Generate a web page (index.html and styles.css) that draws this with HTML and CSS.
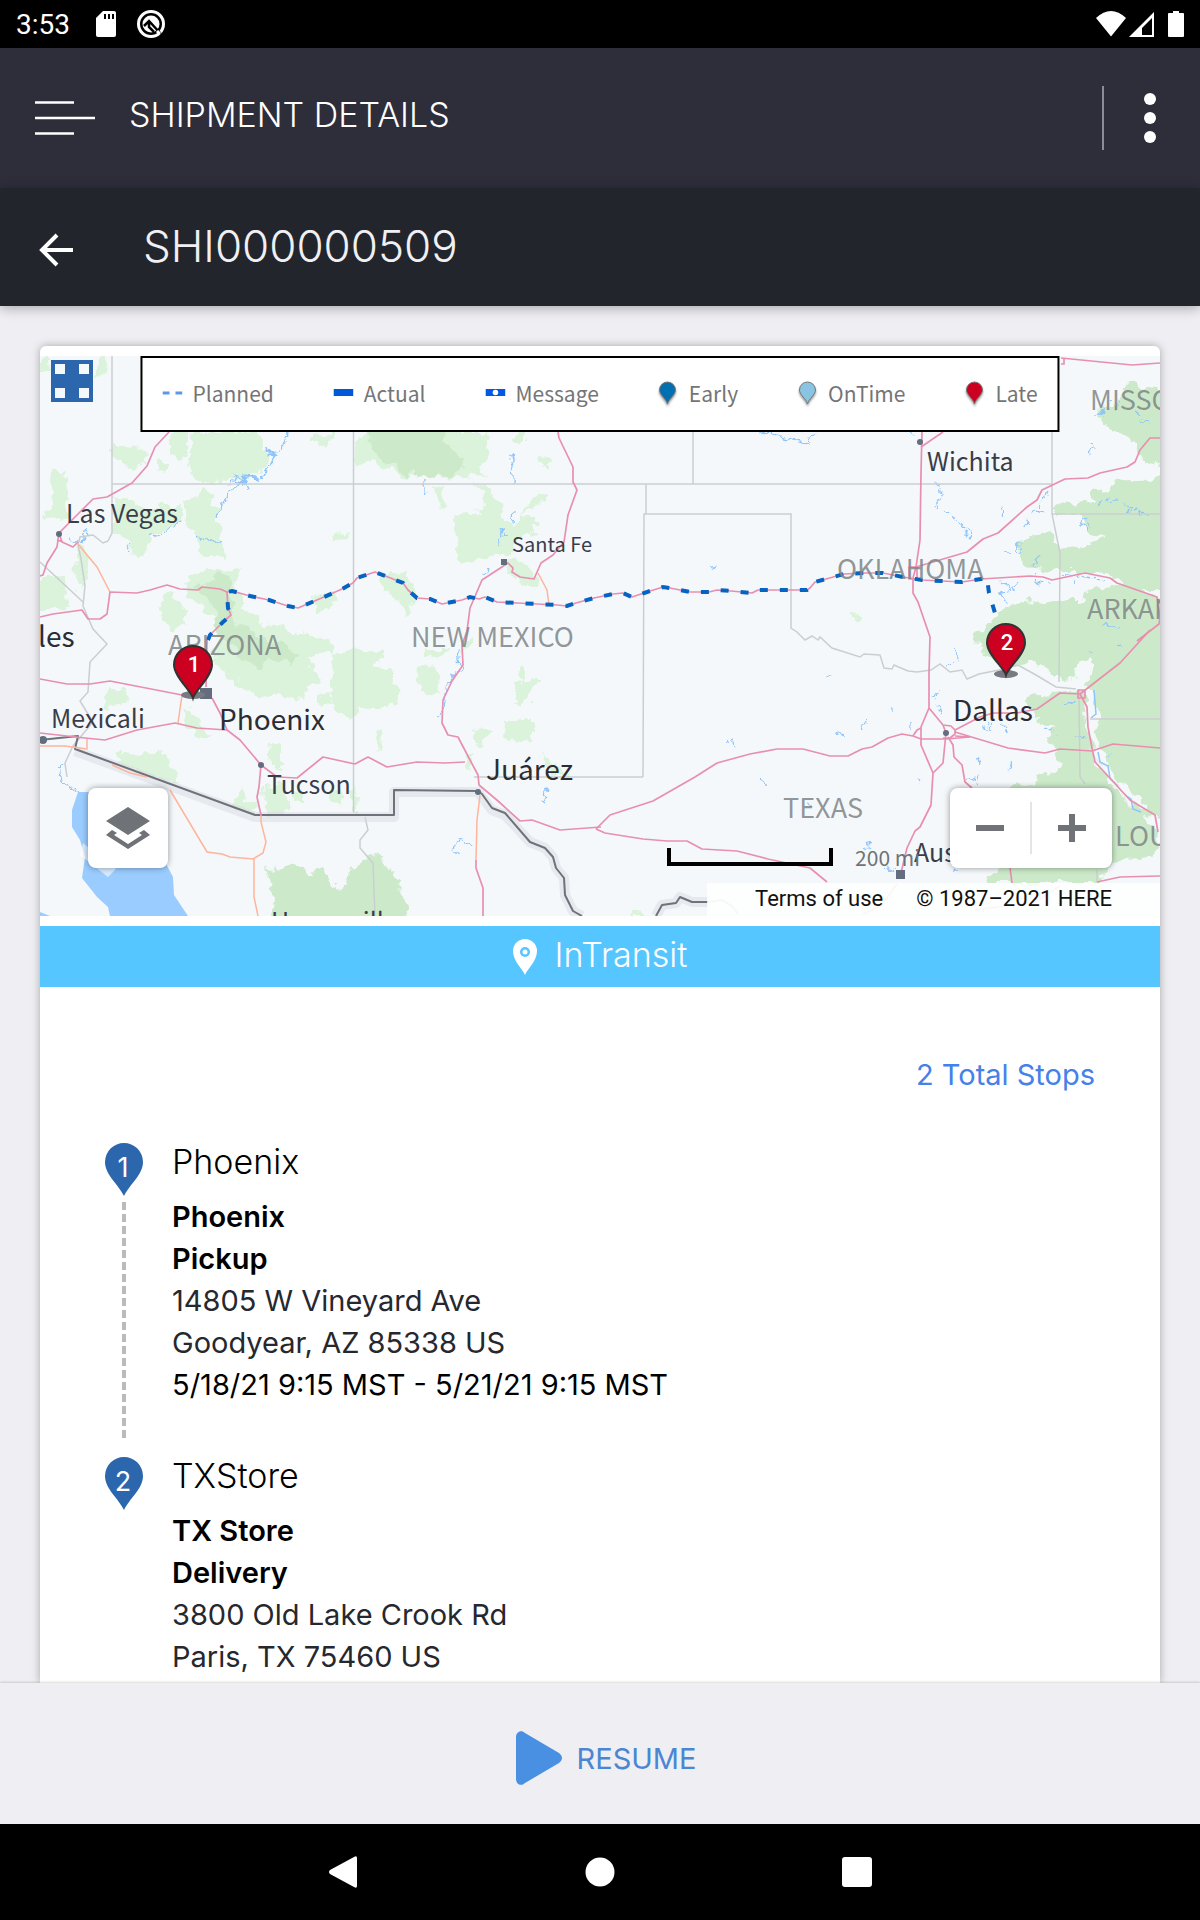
FILE: index.html
```html
<!DOCTYPE html>
<html lang="en">
<head>
    <meta charset="UTF-8">
    <meta name="viewport" content="width=device-width, initial-scale=1.0">
    <title>Shipment Details</title>
    <link rel="stylesheet" href="styles.css">
</head>
<body>
    <div class="status-bar">
        <span class="time">3:53</span>
        <svg class="sd-icon" width="20" height="26" viewBox="0 0 20 26">
            <path fill="#fff" d="M7 0h11a2 2 0 0 1 2 2v22a2 2 0 0 1-2 2H2a2 2 0 0 1-2-2V7z"/>
            <path stroke="#000" stroke-width="2" d="M9 3v5M13 3v5M17 3v5"/>
        </svg>
        <svg class="q-icon" width="30" height="30" viewBox="0 0 30 30">
            <circle cx="15" cy="15" r="12.500" fill="none" stroke="#fff" stroke-width="3"/>
            <circle cx="15" cy="15" r="8.500" fill="#fff"/>
            <path stroke="#000" stroke-width="2.500" fill="none" d="M8 17l5-5 12 13M13 14v4l5 5"/>
            <path stroke="#fff" stroke-width="3" d="M21 22l3 3"/>
        </svg>
        <svg class="signal-icons" width="88" height="26" viewBox="0 0 88 26">
            <path fill="#fff" d="M0 7Q15-7 30 7L15 25.500z"/>
            <path fill="#fff" fill-rule="evenodd" d="M58 1v25H33zM56 7L46 17v7h10z"/>
            <path fill="#fff" d="M77 0h6v2h4a1 1 0 0 1 1 1v22a1 1 0 0 1-1 1H73a1 1 0 0 1-1-1V3a1 1 0 0 1 1-1h4z"/>
        </svg>
    </div>

    <header class="app-bar">
        <button class="icon-btn" aria-label="Menu">
            <svg width="60" height="34" viewBox="0 0 60 34" stroke="#fff" stroke-width="2.500"><path d="M0 1.500h39M0 17h60M0 32.500h39"/></svg>
        </button>
        <h1>SHIPMENT DETAILS</h1>
        <button class="icon-btn more" aria-label="More">
            <svg width="12" height="50" viewBox="0 0 12 50" fill="#fff"><circle cx="6" cy="6" r="6"/><circle cx="6" cy="25" r="6"/><circle cx="6" cy="44" r="6"/></svg>
        </button>
    </header>

    <div class="sub-bar">
        <button class="icon-btn" aria-label="Back">
            <svg width="34" height="34" viewBox="0 0 34 34" fill="none" stroke="#fff" stroke-width="4"><path d="M34 17H3M18 2L3 17l15 15"/></svg>
        </button>
        <h2>SHI000000509</h2>
    </div>

    <main>
        <div class="card">
            <div class="map">
                <svg class="map-canvas" viewBox="40 356 1120 560" preserveAspectRatio="xMidYMid slice">
                    <!-- ragged outlines for parks and lakes -->
                    <filter id="rough" x="0" y="0" width="100%" height="100%">
                        <feTurbulence type="fractalNoise" baseFrequency="0.09" numOctaves="3" seed="4"/>
                        <feDisplacementMap in="SourceGraphic" scale="14" xChannelSelector="R" yChannelSelector="G"/>
                    </filter>
                    <rect x="40" y="356" width="1120" height="560" fill="#f4f8fb"/>

                    <!-- parks -->
                    <g fill="#daf3da" filter="url(#rough)">
                        <path d="M40 356h10l1 17-11 1zM96 360l5-4 6 9-2 12-9-2z"/>
                        <path d="M170 440l5-8h13l-1 25-9 3-8-10zM190 432h68l3 10 9 15-4 12-8 3-15 5-26 5-24-2-5-12 4-15zM112 442l11 5 24 1 1 14-9 2-6 6-10-10-11-5zM158 458l9 4v12l-9-2zM52 472h13l3 28-3 18-18 2-2-8 5-5z"/>
                        <path d="M113 500l14-3 13 10h20l17 0 5 15-25 10-9 12-3 9-5 5-13-15-14-10zM182 502l15-5 5-9 6 2 4 13 10 4-4 16 4 17 3 17-25-2-3-18-9-10z"/>
                        <path d="M183 580l24-12 12 3 24-1-10 12 10 15-3 10 23 16 18 6 22 6 27 5 5 15-18-3-10 8 13 20-15 10-8 12-14-9-23 4-17-7-8-10-15-10-10-20 15-20-20-20-15-10z"/>
                        <path d="M160 595l13-1 4 9 10 7v13l-14 7-10-10v-13zM30 577h35l2 31-37 4zM78 545h7l3 35-8 12-4-22z"/>
                        <path d="M355 440l15-8h117l-2 13 5 10-10 12 7 8-17-2-5 7 25 7 10 18 5 15 10 5 15-25 17-8v8l-17 7-10 11 15 2v12l-15 8-10 15h-15l-20 8-15 2-5-35-3-15 18-3 13-2 4-5-9-20-18-10-20 3-15-3-25 2-10-7-25-10-10 5z"/>
                        <path d="M313 435l22-3v6l-13 9-9-4zM433 485l9 2 1 23-5 1zM505 560l20 0 8 13 7 10-15 4-10-10-7-7zM380 575l25-5 10 20-2 15-8 13-5-18-15-10zM313 595l22-2-2 12-13 7-10-7zM514 432l11-2v12h-11zM540 457l8-1 6 4-7 8-7-4z"/>
                        <path d="M332 655l21-7 17 5 13-5v12l-13 7 20 3 10 20-10 17-27 0-13 11-18-13zM418 665l19 2 3 26h-15l-8-10zM427 648l20 0-6 7-14 2zM460 640l14-2v10l-14 4zM505 720h27v20l-25 2zM475 730l18-2-6 10-12 7zM543 753l20 20 10 4h-16l-12-12zM513 683l12-2v-15l-8 0v13h23l-10 11v12h-17z"/>
                        <path d="M107 688h20l-2 19-20 1zM182 708l15 7 6 12 9 10h-15l-14-10zM117 754l36-1 2-5 10 2 3 13 12 20-17-3-46-17zM268 743l14 2v25l-12-7zM264 788l20-4 5 26-22 4zM235 790l8-2v12l15 3-5 9-18-4zM318 695l12-2 2 14-14-2zM376 730l9-3-1 15-5 10zM295 793l8 0v10l-8 0zM330 790l12 2-2 14-10-4zM353 783l5 12-1 16h-4z"/>
                        <path d="M850 615l8-1 5 5-8 2zM631 910l10 0 4 6h-14zM465 755l8-3v22l-8-8zM331 533l10 3 7-4-4 8-9 1z"/>
                    </g>
                    <g fill="#cceaca" filter="url(#rough)">
                        <path d="M220 572l12 8-2 12 3 28 27 17 25 8 15 8-10 12-20-5-10 8-20-10-10-17-10-1-8-12 5-18-14-14-10-10 14-3z"/>
                        <path d="M365 426h85l-8 14 8 10 10 5 5 13-15 7-20 3-14-3 0-8-8 9-8-3-5-8-15-7-8-8z"/>
                        <path d="M265 865l7 8 6-5 12-5 17 7 6 7 2-7 8-3 4 8 3 15 5-4 12 1 4-13 12-17 14-4 13 17 5 3 5 17 10 36H270l2-31z"/>
                        <path d="M1127 383l6-2 9 9 28-7v84l-23-4-10-13-5-10-17-8-13-12-4-10 17-5z"/>
                        <path d="M1170 473l-20 7-33 3-10 7-17 2 7 11-15-1-29 5 2 8 25-2 7 20 20 4-24 10-23 3-10-18-30 5-2 13 7 17 25 3h30l30 5 20 15h40z"/>
                        <path d="M1170 600l-30-10-20-7-30 7-6 10-14 0-20 4-20-4-20 5-15 10-10 15-15 3 15 22 18 8 17 2 20-2 20 15 18 2-3-12 7-8 8-2 5 12-10 15 7 8 5 20-7 32 5 12 20 30 25 25 27 10z"/>
                        <path d="M1077 690l13 10-7 15 7 25 3 20 22 30 30 25 13 15 2 20-10 7-30 3-10 5-15 18H990l-5-7 15-8 10-8-5-70 10-7 20 2 5-10 20-7-5-13-5-17 5-10-15-5-15-25z"/>
                    </g>

                    <!-- water -->
                    <path fill="#9accff" d="M78 792l-6 18v17l8 13 5 17-3 21 15 19 11 10 2 9h78l-14-21-1-18-8-15V792zM40 912l10 4H40z"/>
                    <path fill="#fff" opacity=".6" d="M83 843l-3 12 28 22 8-8z"/>
                    <g fill="none" stroke="#8fc4fb" stroke-width="1.300" stroke-linejoin="round" filter="url(#rough)">
                        <path d="M288 432l-6 18-12 4 6 6-10 12-22 8-8-6-4 10 12-4 4 8M240 482l-18 20-4 18M195 536l14 4h14M152 538l16-10 12-6M127 545l6 10M73 538l8 4 4-16 3 10M510 455l4 20-1 9M515 510l-1 12M507 531l-6 1-4 16M487 567l-3 8M760 432l22 6 26 6 8-12M910 432l8 4"/>
                        <path stroke-width="3" d="M268 450l8 6-2 4-6-4M236 484l10-8 12 2"/>
                        <path d="M458 647l2 22-14 20-4 22-5 8M545 788l-3 8 5 4M424 480l0 14 4-3M710 571l4-6-4 2M730 742l6 3M762 779l5 5M806 800l4 6"/>
                        <path d="M65 764l-8 6 3 12 10 5 8 4M454 850l6-14 12 14M455 851h6"/>
                        <path stroke-dasharray="9 3 4 2" d="M935 505l8-12-6-12M943 512l10 4 12 14 4 8 4-8-10-2M1003 518l3-14-4 6M1031 514l10-14 4-8M1035 510l10 2M1027 520l-2 8M1015 552l6-10-2 14M1033 566l5-10M1003 552h12M1000 582l8 6-6 8 4 8M1003 584l10 6 6-8M1036 577l6 6 10 3M1065 574l40 6M1080 570l-6 14"/>
                        <path stroke-dasharray="9 3 4 2" d="M1098 508l8-10 6 6 8-2M1096 414l8-2 2 6M1110 400l8 4-4 6M1135 410l10 8M1140 420l8 4M1124 506l10 4 8 4 10-2M1080 524l8-4-2 10-6-6M1090 455l6-6-4-6M1105 627l14 0M1090 650l4 4M1117 645l8 3"/>
                        <path stroke-dasharray="9 3 4 2" d="M827 676l4-2M865 728l-2-5 6-3M894 704v8M912 722v10M838 730l4 6M931 695l10-4-6 8M935 708l6 6M946 670l12-14-4-6M977 757l5 10M1010 762l2 8M966 782l12-6-4 8M915 777l4 6M980 724l10 6-4-8M1000 724l10 4-6 4M1046 728l12 6M1062 704l12-2-8 4M865 844l6 4M953 870l6 2M886 866l8 4M1075 736l10 4M1111 750l-4 8"/>
                    </g>
                    <path fill="none" stroke="#f4f8fb" stroke-width="7" filter="url(#rough)" d="M1090 690l6 25-5 20 8 20 14 24 20 20 14 10"/>
                    <path fill="none" stroke="#8fc4fb" stroke-width="1.500" d="M1094 690l2 24-5 4M1098 752l2 10 8 4 2 12 8 8M1125 795l6 4 2 10 8 3"/>

                    <!-- state lines -->
                    <g fill="none" stroke="#cbced1" stroke-width="1.500">
                        <path d="M112 356v177l-4 8-5 2-10-8-13 2-2 8 3 14 4 27-2 20 10 23 14 15-17 18-2 30-8 9 13 21-20 24-8 17 2 14M40 562l43 40"/>
                        <path d="M112 484h940M353.500 432v381M693 432v52M646 484v30M643 777l1-263h147v114l6 4 8 8 7-4 6 4 2-3 12 11 28 9 4-3 16 1 4 13 8 1 2-4 14 6 9 1 14-2 9-6 10 8 12-2 5 9 12-5 20-4 19-5 18 10 20 12 20 2M643 777H474"/>
                        <path d="M1052 432v82l8 39-1 129M1052 514h108M1079 690l1 87 5 7M1097 870v12M1090 719h70M365 817l3 13-8 10v8l13 15 2 53M708 902l14-2 10 6 6 8"/>
                    </g>

                    <!-- national border -->
                    <g fill="none" stroke-linejoin="round">
                        <path stroke="#d8dadf" stroke-opacity=".5" stroke-width="10" d="M75 751l180 66h139v-25h84l14 18 13 5 25 27 15 6 8 9 3 11 8 10 1 17 8 16 9 5M656 916l6-11 14-2 4-6 12 5 16 0"/>
                        <path stroke="#6f717b" stroke-width="2" d="M40 740l38-4-3 13 180 66h139v-25l84 1 4 3 10 14 13 5 25 29 15 6 8 9 3 11 8 10 1 17 8 16 9 5M656 916l6-11 14-2 4-6 12 5 16 0"/>
                    </g>

                    <!-- highways -->
                    <g fill="none" stroke="#ffb49c" stroke-width="1.500">
                        <path d="M78 544l19 23 13 25M538 573l9 17 2 15M182 695l-4 28M261 815l0 7 5 20-3 11-10 6-23-2-8-3-15-2-37-62M254 859v38l4 19M112 765l18 8 17 4M40 746h25l22 3v-11M480 795l-3 25-1 40"/>
                    </g>
                    <g fill="none" stroke="#e88fb0" stroke-width="1.700" stroke-linejoin="round">
                        <path d="M169 432l-14 15-8 19-15 17-25 14-14 2-13 13-21 21-2 14-10 16-4 12-3 1M59 533l3 9 11 5 5-5M57 540l6 2"/>
                        <path d="M40 617l13-3 29-4 6 9h12l7-5 3-22 27 1 13-3 17-5 13 4 18 1 4-3 18 2 7 3 5-1 18 5 19 4 19 6 10 2 7-3 19-8 18-8 11-6 4-5 18-6 18 7 10 4 5 7 9 8 13 1 12 5 20-4 8-3 9 2 6-2 12 5 20 1 20 1 20 1 10 1 9-3 18-5 19-4 10-1 9 4 18-6 13-4 7 1 20 4h19l8-2 14 1 21 2 6-3h49l3-2 5-6 11-3 18-5 20-1 19 0 20 4 19 3 20 1 20 1 19-3 49-3 13 1 9 3 33-7 25 5 7 5 40 14 3 21-1 6-22 17"/>
                        <path d="M227 592l1 16 3 7-8 7-13 13-3 5-1 47M40 679l27 5h23l20-3 72 14M212 698l8 15 7 17"/>
                        <path d="M558 432l1 6 14 29v15l4 8-9 25-4 27-11 13-12 8-7 16-14-2-8-5 1-4-5-5-26 17-12 28-3 23-5 14 1 20-11 16-9 19-1 23 6 12 10 2 12 23 8 15 1 10 6 5 13 11 22 20 12-1 28 10 41-3"/>
                        <path d="M465 762l-20 1-28-1-30 5-19-10-13 7-32-7-26 21-20-1-16-12-21-25-13-10-30-2-22-5-38 7-32 10-20-2-45-5M261 765l-2 22-2 10 4 18M476 860v8l7 20v28"/>
                        <path d="M596 829l14-14 43-14 42-24 22-14 33-9 27-5h26l27 7h18l14-7 10-2 16-9 14-4 11 2 8 3h25l24-2M913 736l4-6 4-2M596 829l9 4 38 6 24 2h20l15 8 35 2 31 8 42 9 17 14"/>
                        <path d="M922 432l-1 41-1 67-4 27-3 11v15l5 9 12 35-1 36v35l-8 19v18l12 28-2 32-11 22-5 4-8 17-7 29M929 708l14 17 3 8-3 30-10 10M943 725l8 1 4 4v4l-5 4-7 0M948 737l5 8 1 12 8 8 3 17 7 6M1010 868l2 15"/>
                        <path d="M955 732l53 16 37 5 15-4 32 2 21-7 47 4M955 730l25-13 13-4h24l20-4 23-16 20 1 40-31 30-33M1078 690h7v8h-7zM1080 694l7 13 1 20 4 21 3 14 35 38 25 15 3 17M955 736l15 1"/>
                        <path d="M916 567l51-15 16-13 15-6 29-26 10-7 5-10 23-11 23-1 12-5 27-6 8-5 5-12 10-12h10M921 447l22-15M1061 358l71 7 28-2M1064 358v6h-3M1097 882l23-5 40-1M909 567h8v12h-8z"/>
                        <path stroke-opacity=".4" d="M897 884l-16 22-18 8M1060 886l-25 16-60 8"/>
                    </g>

                    <!-- shipment route -->
                    <path class="route" d="M208 640l2-5 13-13 8-7-3-7-1-16 5-1 18 5 19 4 19 6 10 2 7-3 19-8 18-8 11-6 4-5 18-6 18 7 10 4 5 7 9 8 13 1 12 5 20-4 8-3 9 2 6-2 12 5 20 1 20 1 20 1 10 1 9-3 18-5 19-4 10-1 9 4 18-6 13-4 7 1 20 4h19l8-2 14 1 21 2 6-3h49l3-2 5-6 11-3 18-5 20-1 19 0 20 4 19 3 20 1 20 1 19-3 6-1 2 15 6 20"/>

                    <!-- places -->
                    <g fill="#636d7d">
                        <circle cx="59" cy="534" r="3"/><circle cx="920" cy="442" r="3"/><circle cx="946" cy="733" r="3"/><circle cx="261" cy="765" r="3"/><circle cx="478" cy="792" r="3"/><circle cx="43" cy="740" r="4"/>
                        <path d="M501 559h6v6h-6zM200 688h12v11h-12zM896 870h9v9h-9z"/>
                    </g>
                    <g class="region">
                        <text x="168" y="655">ARIZONA</text>
                        <text x="411" y="647">NEW MEXICO</text>
                        <text x="837" y="579">OKLAHOMA</text>
                        <text x="1090" y="410">MISSOURI</text>
                        <text x="1087" y="619">ARKANSAS</text>
                        <text x="783" y="818">TEXAS</text>
                        <text x="1115" y="846">LOUISIANA</text>
                    </g>
                    <g class="town">
                        <text x="66" y="523">Las Vegas</text>
                        <text x="927" y="471">Wichita</text>
                        <text x="51" y="728">Mexicali</text>
                        <text x="267" y="794">Tucson</text>
                        <text x="271" y="931">Hermosillo</text>
                        <text x="914" y="862">Austin</text>
                        <text class="small" x="512" y="552">Santa Fe</text>
                    </g>
                    <g class="city">
                        <text x="219" y="730">Phoenix</text>
                        <text x="486" y="780">Juárez</text>
                        <text x="953" y="721">Dallas</text>
                        <text x="38" y="647">les</text>
                    </g>

                    <!-- stop markers -->
                    <g class="marker">
                        <ellipse cx="193" cy="695" rx="12" ry="4"/>
                        <path d="M193 698c-2-7-19-22-19-33a19 19 0 0 1 38 0c0 11-17 26-19 33z"/>
                        <text x="194" y="672">1</text>
                        <ellipse cx="1006" cy="674" rx="12" ry="4"/>
                        <path d="M1006 675c-2-7-19-21-19-32a19 19 0 0 1 38 0c0 11-17 25-19 32z"/>
                        <text x="1007" y="650">2</text>
                    </g>
                </svg>

                <button class="fullscreen" aria-label="Full screen">
                    <i></i><i></i><i></i><i></i>
                </button>

                <div class="legend">
                    <span><svg width="20" height="24"><path stroke="#5c97ea" stroke-width="3" d="M0 12h7M13 12h7"/></svg>Planned</span>
                    <span><svg width="20" height="24"><path fill="#0358d8" d="M0 8h20v7H0z"/></svg>Actual</span>
                    <span><svg width="20" height="24"><path fill="#0358e8" d="M0 8h20v7H0z"/><circle cx="10" cy="11.500" r="2.800" fill="#fff"/></svg>Message</span>
                    <span><svg class="pin" width="20" height="24"><path fill="#0070b0" d="M9 23C8 18 1 14 1 9a8 8 0 0 1 16 0c0 5-7 9-8 14z"/></svg>Early</span>
                    <span><svg class="pin" width="20" height="24"><path fill="#89c4e2" d="M9 23C8 18 1 14 1 9a8 8 0 0 1 16 0c0 5-7 9-8 14z"/></svg>OnTime</span>
                    <span><svg class="pin" width="20" height="24"><path fill="#cc0020" d="M9 23C8 18 1 14 1 9a8 8 0 0 1 16 0c0 5-7 9-8 14z"/></svg>Late</span>
                </div>

                <button class="map-btn layers" aria-label="Map layers">
                    <svg width="44" height="42" viewBox="0 0 44 42" fill="#6f7277"><path d="M22 0l22 14-22 14L0 14zM0 28l6-5 5 3-3 2 14 9 14-9-3-2 5-3 6 5-22 14z"/></svg>
                </button>

                <div class="scale"><div class="scale-bar"></div>200 mi</div>

                <div class="map-btn zoom">
                    <button aria-label="Zoom out"><svg width="28" height="28"><path fill="#6f7277" d="M0 11h28v6H0z"/></svg></button>
                    <button aria-label="Zoom in"><svg width="28" height="28"><path fill="#6f7277" d="M0 11h11V0h6v11h11v6H17v11h-6V17H0z"/></svg></button>
                </div>

                <div class="copyright">
                    <a href="#">Terms of use</a>
                    <span>© 1987–2021 HERE</span>
                </div>
            </div>

            <div class="transit">
                <svg width="24" height="36" viewBox="0 0 24 36"><path fill="#fff" fill-rule="evenodd" d="M12 36C9 29 0 22 0 12a12 12 0 0 1 24 0c0 10-9 17-12 24zM12 8a5 5 0 1 0 0 10 5 5 0 0 0 0-10z"/><circle cx="12" cy="13" r="2.500" fill="#fff"/></svg>
                <span>InTransit</span>
            </div>

            <div class="total"><a href="#">2 Total Stops</a></div>

            <ul class="stops">
                <li>
                    <div class="stop-pin">
                        <svg width="38" height="53" viewBox="0 0 38 53"><path d="M19 53C14 42 0 32 0 19a19 19 0 0 1 38 0c0 13-14 23-19 34z"/><text x="18" y="34">1</text></svg>
                    </div>
                    <div class="stop-info">
                        <h3>Phoenix</h3>
                        <p><b>Phoenix</b></p>
                        <p><b>Pickup</b></p>
                        <p>14805 W Vineyard Ave</p>
                        <p>Goodyear, AZ 85338 US</p>
                        <p class="date">5/18/21 9:15 MST - 5/21/21 9:15 MST</p>
                    </div>
                </li>
                <li>
                    <div class="stop-pin">
                        <svg width="38" height="53" viewBox="0 0 38 53"><path d="M19 53C14 42 0 32 0 19a19 19 0 0 1 38 0c0 13-14 23-19 34z"/><text x="18" y="34">2</text></svg>
                    </div>
                    <div class="stop-info">
                        <h3>TXStore</h3>
                        <p><b>TX Store</b></p>
                        <p><b>Delivery</b></p>
                        <p>3800 Old Lake Crook Rd</p>
                        <p>Paris, TX 75460 US</p>
                    </div>
                </li>
            </ul>
        </div>
    </main>

    <footer>
        <button class="resume">
            <svg width="46" height="54" viewBox="0 0 46 54"><path fill="#4990e2" d="M0 6c0-5 5-8 9-4l34 20c4 3 4 7 0 10L9 52c-4 4-9 1-9-4z"/></svg>
            RESUME
        </button>
    </footer>

    <nav class="nav-bar">
        <button aria-label="Back"><svg width="30" height="32"><path fill="#fff" d="M29 2v28q0 3-3 1L2 18q-2-2 0-4L26 1q3-2 3 1z"/></svg></button>
        <button aria-label="Home"><svg width="30" height="30"><circle cx="15" cy="15" r="14.500" fill="#fff"/></svg></button>
        <button aria-label="Recent apps"><svg width="30" height="30"><rect width="30" height="30" rx="3" fill="#fff"/></svg></button>
    </nav>
</body>
</html>
```
FILE: styles.css
```css
* {
    box-sizing: border-box;
}

body {
    display: flex;
    flex-direction: column;
    min-height: 100vh;
    margin: 0;
    background-color: #eeeef3;
    font-family: Inter, "Liberation Sans", sans-serif;
    color: #000;
}

button {
    padding: 0;
    border: none;
    background: none;
    font: inherit;
    color: inherit;
    cursor: pointer;
}

svg {
    display: block;
}

a {
    color: inherit;
    text-decoration: none;
}

h1, h2, h3, p, ul {
    margin: 0;
    padding: 0;
    font-weight: 400;
}

h1, h2, h3 {
    font-weight: 300;
}

/* status bar */
.status-bar {
    display: flex;
    align-items: center;
    height: 48px;
    padding: 0 16px;
    background-color: #000;
    color: #fff;
    font-family: Roboto, sans-serif;
    font-size: 28px;
}

.sd-icon {
    margin-left: 26px;
}

.q-icon {
    margin-left: 20px;
}

.signal-icons {
    margin-left: auto;
}

/* headers */
.app-bar {
    display: flex;
    align-items: center;
    height: 140px;
    padding-left: 35px;
    background-color: #2d2e3a;
    color: #fff;
}

.app-bar h1 {
    flex: 1;
    padding: 0 0 8px 34px;
    font-size: 34px;
}

.more {
    display: flex;
    align-items: center;
    height: 64px;
    padding: 0 44px 0 40px;
    border-left: 2px solid #8b8c96;
}

.sub-bar {
    display: flex;
    align-items: center;
    height: 118px;
    padding: 6px 39px 0;
    background-color: #22252c;
    color: #f0f0f4;
    box-shadow: 0 2px 12px rgba(0, 0, 0, 0.3);
}

.sub-bar h2 {
    padding: 0 0 8px 70px;
    font-size: 44px;
}

/* card */
main {
    display: flex;
    flex: 1;
    padding: 40px 40px 0;
}

.card {
    flex: 1;
    min-width: 0;
    padding-top: 10px;
    border-radius: 6px 6px 0 0;
    background-color: #fff;
    box-shadow: 0 0 8px rgba(0, 0, 0, 0.3);
}

/* map */
.map {
    position: relative;
    height: 560px;
    overflow: hidden;
    font-family: "Noto Sans CJK SC", "Noto Sans", sans-serif;
}

.map-canvas {
    width: 100%;
    height: 100%;
}

.route {
    fill: none;
    stroke: #0563c1;
    stroke-width: 4;
    stroke-dasharray: 8 12;
}

.region {
    font-size: 27px;
    fill: #7f8587;
    fill-opacity: 0.85;
}

.town {
    font-size: 25px;
    fill: #3a3d49;
}

.town .small {
    font-size: 20px;
}

.city {
    font-size: 28px;
    fill: #2b2d33;
}

.marker path {
    fill: #cc0020;
    stroke: #333;
    stroke-width: 2;
}

.marker ellipse {
    fill: #777a80;
}

.marker text {
    fill: #fff;
    font: 500 22px Roboto, sans-serif;
    text-anchor: middle;
}

.fullscreen {
    position: absolute;
    top: 4px;
    left: 11px;
    display: grid;
    grid-template-columns: 10px 10px;
    gap: 14px;
    padding: 4px;
    background-color: #2c67ad;
}

.fullscreen i {
    height: 10px;
    background-color: #f4f8fb;
}

.legend {
    position: absolute;
    top: 0;
    left: 50%;
    display: flex;
    align-items: center;
    gap: 60px;
    height: 76px;
    padding: 0 20px 2px;
    border: 2px solid #000;
    background-color: #fff;
    color: #757575;
    font-size: 21px;
    white-space: nowrap;
    transform: translateX(-50%);
}

.legend span {
    display: flex;
    align-items: center;
    gap: 10px;
}

.pin path {
    stroke: #777;
    stroke-width: 1;
}

.pin {
    filter: drop-shadow(0 2px 1px rgba(0, 0, 0, 0.4));
}

.map-btn {
    position: absolute;
    bottom: 48px;
    height: 80px;
    border-radius: 8px;
    background-color: #fff;
    box-shadow: 0 0 6px rgba(0, 0, 0, 0.4);
}

.layers {
    left: 48px;
    display: flex;
    align-items: center;
    justify-content: center;
    width: 80px;
}

.zoom {
    right: 48px;
    display: flex;
    align-items: center;
}

.zoom button {
    height: 52px;
    padding: 0 26px;
}

.zoom button + button {
    border-left: 2px solid #e4e5e7;
}

.scale {
    position: absolute;
    right: 240px;
    bottom: 44px;
    display: flex;
    align-items: center;
    gap: 22px;
    color: #6f7277;
    font-size: 21px;
}

.scale-bar {
    width: 166px;
    height: 18px;
    border: 4px solid #000;
    border-top: none;
}

.copyright {
    position: absolute;
    right: 0;
    bottom: 0;
    display: flex;
    gap: 33px;
    padding: 0 48px 2px;
    background-color: rgba(255, 255, 255, 0.8);
    color: #111;
    font-family: Roboto, sans-serif;
    font-size: 22px;
    line-height: 31px;
}

/* shipment state */
.transit {
    display: flex;
    align-items: center;
    justify-content: center;
    gap: 18px;
    height: 61px;
    margin-top: 10px;
    background-color: #55c6ff;
    color: #fff;
    font-size: 34px;
    font-weight: 300;
}

.transit span {
    padding-bottom: 4px;
}

.total {
    padding: 64px 65px 0;
    color: #4581e8;
    font-size: 29px;
    line-height: 48px;
    text-align: right;
}

/* stops */
.stops {
    padding: 42px 65px 0;
    list-style: none;
}

.stops li {
    display: flex;
    gap: 29px;
}

.stops li:first-child {
    height: 314px;
}

.stop-pin {
    display: flex;
    flex-direction: column;
    padding-top: 2px;
}

.stop-pin path {
    fill: #2c67ad;
}

.stop-pin text {
    fill: #fff;
    font-size: 27px;
    text-anchor: middle;
}

.stops li:first-child .stop-pin::after {
    content: "";
    width: 4px;
    height: 240px;
    margin: 6px 0 0 17px;
    background: repeating-linear-gradient(#bbb 0 8px, transparent 8px 12px);
}

.stop-info h3 {
    margin-bottom: 13px;
    font-size: 34px;
    line-height: 42px;
}

.stop-info p {
    color: #26282e;
    font-size: 29px;
    line-height: 42px;
}

.stop-info b {
    color: #000;
    font-weight: 600;
}

.stop-info .date {
    color: #000;
}

/* footer */
footer {
    position: relative;
    display: flex;
    align-items: center;
    justify-content: center;
    height: 141px;
    padding: 9px 0 0 12px;
    background-color: #eeeef3;
    box-shadow: 0 -1px 2px rgba(0, 0, 0, 0.15);
}

.resume {
    display: flex;
    align-items: center;
    gap: 15px;
    color: #4a86d2;
    font-size: 29px;
}

.nav-bar {
    display: flex;
    align-items: center;
    justify-content: center;
    gap: 227px;
    height: 96px;
    background-color: #000;
}
```
